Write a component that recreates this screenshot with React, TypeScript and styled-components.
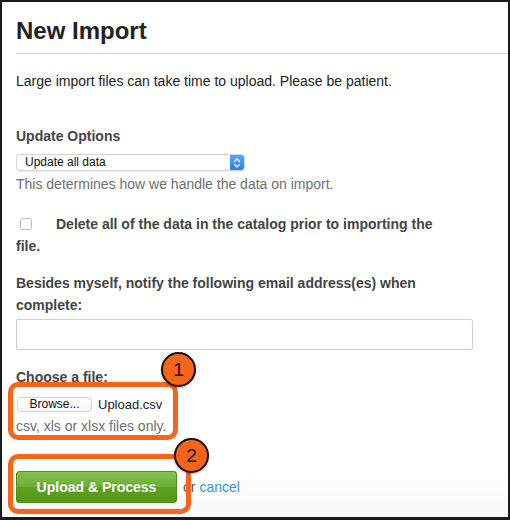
import React from "react";
import styled, { createGlobalStyle } from "styled-components";

const GlobalStyle = createGlobalStyle`
  html, body {
    margin: 0;
    padding: 0;
    background: #000;
  }
  body {
    font-family: "Liberation Sans", Arial, sans-serif;
  }
`;

const Frame = styled.div`
  position: relative;
  width: 510px;
  height: 520px;
  box-sizing: border-box;
  border-style: solid;
  border-color: #1a1a1a;
  border-width: 2px 2px 3px 2px;
  padding: 15px 0 0 14px;
  background: linear-gradient(#fff 0, #fff 470px, #f7f7f7 100%);
  overflow: hidden;
  color: #222;
`;

const Title = styled.h1`
  margin: 0;
  font-size: 24px;
  line-height: 28px;
  font-weight: bold;
  color: #222;
  padding-bottom: 8px;
  border-bottom: 1px solid #dcdcdc;
`;

const Intro = styled.p`
  margin: 17px 0 0;
  font-size: 14px;
  line-height: 20px;
  color: #222;
`;

const FieldLabel = styled.div<{ $top: number; $lh?: number }>`
  margin-top: ${(p) => p.$top}px;
  font-size: 14px;
  line-height: ${(p) => p.$lh ?? 20}px;
  font-weight: bold;
  color: #444;
  width: 440px;
`;

const SelectBox = styled.div`
  margin-top: 8px;
  width: 229px;
  height: 17px;
  box-sizing: border-box;
  display: flex;
  align-items: stretch;
  border: 1px solid #d4d4d4;
  border-radius: 4px;
  overflow: hidden;
  background: #fff;
  box-shadow: 0 1px 1px rgba(0, 0, 0, 0.06);
`;

const SelectText = styled.span`
  flex: 1;
  padding-left: 8px;
  font-size: 12px;
  line-height: 15px;
  color: #111;
`;

const Stepper = styled.span`
  width: 14px;
  display: flex;
  align-items: center;
  justify-content: center;
  background: linear-gradient(#5aa5f7, #2a7ff0);
`;

const Help = styled.div<{ $top: number }>`
  margin-top: ${(p) => p.$top}px;
  font-size: 14px;
  line-height: 20px;
  color: #6f6f6f;
`;

const CheckBox = styled.span`
  display: inline-block;
  width: 12px;
  height: 12px;
  box-sizing: border-box;
  margin: 0 24px 0 4px;
  border: 1px solid #b8b8b8;
  border-radius: 3px;
  background: #fff;
  vertical-align: -1px;
`;

const TextInput = styled.div`
  margin-top: 3px;
  width: 457px;
  height: 31px;
  box-sizing: border-box;
  border: 1px solid #cfcfcf;
  border-radius: 2px;
  background: #fff;
`;

const FileRow = styled.div`
  margin-top: 10px;
  display: flex;
  align-items: center;
  height: 15px;
`;

const BrowseButton = styled.span`
  width: 75px;
  height: 15px;
  box-sizing: border-box;
  margin-left: 1px;
  border: 1px solid #d6d6d6;
  border-radius: 3px;
  background: linear-gradient(#fff, #f4f4f4);
  font-size: 12px;
  line-height: 13px;
  text-align: center;
  color: #111;
`;

const FileName = styled.span`
  margin-left: 6px;
  font-size: 13px;
  color: #222;
`;

const Actions = styled.div`
  margin-top: 35px;
  display: flex;
  align-items: center;
  font-size: 14px;
  color: #555;
`;

const PrimaryButton = styled.span`
  width: 161px;
  height: 32px;
  box-sizing: border-box;
  display: flex;
  align-items: center;
  justify-content: center;
  border: 1px solid #4f8d1b;
  border-radius: 3px;
  background: linear-gradient(#82c04f 0%, #6cb037 48%, #5aa11c 52%, #55991a 100%);
  color: #fff;
  font-weight: bold;
  font-size: 14px;
  text-shadow: 0 -1px 0 rgba(0, 0, 0, 0.15);
  margin-right: 6px;
`;

const CancelLink = styled.a`
  margin-left: 4px;
  color: #2b9bd3;
  text-decoration: none;
`;

const Callout = styled.div<{ $x: number; $y: number; $w: number; $h: number }>`
  position: absolute;
  left: ${(p) => p.$x}px;
  top: ${(p) => p.$y}px;
  width: ${(p) => p.$w}px;
  height: ${(p) => p.$h}px;
  box-sizing: border-box;
  border: 5px solid #f8641a;
  border-radius: 10px;
  pointer-events: none;
`;

const Badge = styled.div<{ $x: number; $y: number }>`
  position: absolute;
  left: ${(p) => p.$x}px;
  top: ${(p) => p.$y}px;
  width: 35px;
  height: 35px;
  box-sizing: border-box;
  border: 2px solid #111;
  border-radius: 50%;
  background: #f8641a;
  display: flex;
  align-items: center;
  justify-content: center;
  font-size: 19px;
  color: #111;
  box-shadow: 0 1px 2px rgba(0, 0, 0, 0.3);
`;

const Chevrons = () => (
  <svg width="8" height="12" viewBox="0 0 8 12">
    <path
      d="M1.5 4.5 L4 2 L6.5 4.5 M1.5 7.5 L4 10 L6.5 7.5"
      fill="none"
      stroke="#fff"
      strokeWidth="1.3"
      strokeLinecap="round"
      strokeLinejoin="round"
    />
  </svg>
);

const App = () => {
  return (
    <>
      <GlobalStyle />
      <Frame>
        <Title>New Import</Title>
        <Intro>Large import files can take time to upload. Please be patient.</Intro>

        <FieldLabel $top={35}>Update Options</FieldLabel>
        <SelectBox>
          <SelectText>Update all data</SelectText>
          <Stepper>
            <Chevrons />
          </Stepper>
        </SelectBox>
        <Help $top={3}>This determines how we handle the data on import.</Help>

        <FieldLabel $top={20} $lh={21.5}>
          <CheckBox />
          Delete all of the data in the catalog prior to importing the file.
        </FieldLabel>

        <FieldLabel $top={16} $lh={21.5}>
          Besides myself, notify the following email address(es) when complete:
        </FieldLabel>
        <TextInput />

        <FieldLabel $top={17}>Choose a file:</FieldLabel>
        <FileRow>
          <BrowseButton>Browse...</BrowseButton>
          <FileName>Upload.csv</FileName>
        </FileRow>
        <Help $top={4}>csv, xls or xlsx files only.</Help>

        <Actions>
          <PrimaryButton>Upload &amp; Process</PrimaryButton>
          or <CancelLink href="#">cancel</CancelLink>
        </Actions>

        <Callout $x={6} $y={380} $w={170} $h={58} />
        <Badge $x={159} $y={350}>1</Badge>
        <Callout $x={6} $y={452} $w={183} $h={60} />
        <Badge $x={172} $y={436}>2</Badge>
      </Frame>
    </>
  );
};

export default App;
